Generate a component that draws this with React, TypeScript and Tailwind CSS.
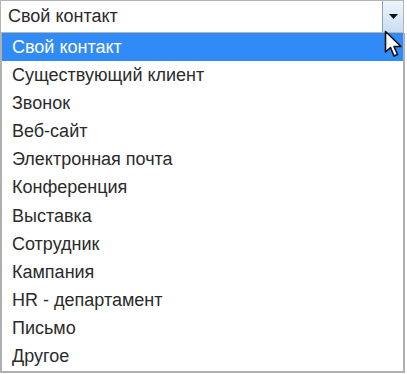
const options = [
  "Свой контакт",
  "Существующий клиент",
  "Звонок",
  "Веб-сайт",
  "Электронная почта",
  "Конференция",
  "Выставка",
  "Сотрудник",
  "Кампания",
  "HR - департамент",
  "Письмо",
  "Другое",
];

function Cursor() {
  return (
    <svg
      width="20"
      height="30"
      viewBox="0 0 20 30"
      className="absolute left-[384px] top-[30px]"
    >
      <path
        d="M1.5 1.5 L1.5 22 L6.5 17.5 L10 26 L13.5 24.5 L10 16.5 L17 16.5 Z"
        fill="#fff"
        stroke="#111"
        strokeWidth="1.6"
        strokeLinejoin="round"
      />
    </svg>
  );
}

export default function App() {
  return (
    <div
      className="relative w-[407px] h-[374px] bg-white overflow-hidden"
      style={{ fontFamily: '"Liberation Sans", Arial, sans-serif' }}
    >
      <div className="flex h-[33px] w-[404px] border border-[#b5b5b5] bg-white">
        <div className="flex-1 flex items-center pl-[7px] text-[18px] text-[#2b2b2b]">
          Свой контакт
        </div>
        <div className="w-[21px] flex items-center justify-center border-l border-[#8aa4c0] bg-gradient-to-b from-[#eef5fc] to-[#c9ddf3]">
          <svg width="9" height="5" viewBox="0 0 9 5">
            <path d="M0 0 H9 L4.5 5 Z" fill="#111" />
          </svg>
        </div>
      </div>
      <div className="grid grid-rows-12 h-[340px] w-[405px] border-x-2 border-b-2 border-[#b0b0b0]">
        {options.map((o, i) => (
          <div
            key={o}
            className={
              i === 0
                ? "flex items-center pl-[10px] text-[18px] bg-[#318bf7] text-white"
                : "flex items-center pl-[10px] text-[18px] text-[#2b2b2b]"
            }
          >
            {o}
          </div>
        ))}
      </div>
      <Cursor />
    </div>
  );
}
